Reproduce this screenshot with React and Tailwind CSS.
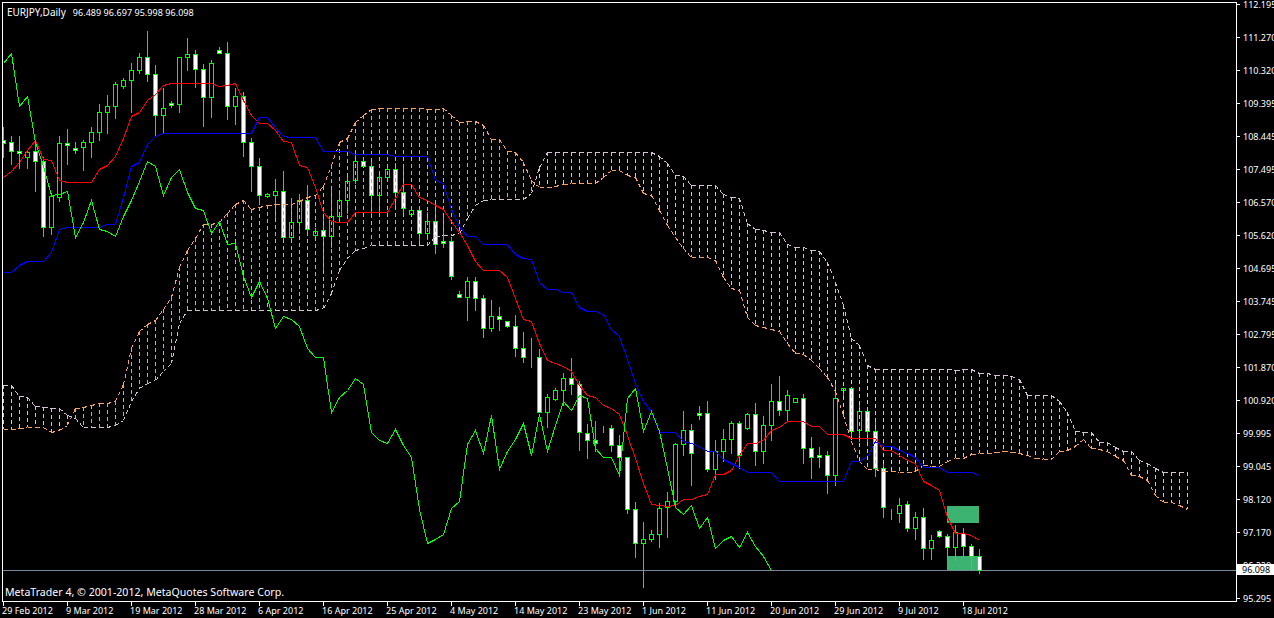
const C = [
[127,140,143,157,1],[136,142,151,164,1],[136,151,153,168,1],[150,152,157,168,0],[140,151,161,191,1],[157,161,227,236,1],[193,196,227,234,0],[136,143,197,201,0],[129,143,145,164,1],[142,148,150,153,1],
[140,142,147,170,0],[127,132,142,157,0],[104,112,132,140,0],[95,106,112,133,0],[82,84,106,118,0],[78,80,86,88,0],[63,70,80,112,0],[53,57,70,73,0],[31,57,74,81,1],[65,74,115,136,1],
[88,108,115,132,0],[101,103,105,107,1],[57,57,104,112,0],[38,54,57,70,0],[50,54,69,87,1],[64,69,97,126,1],[60,63,97,117,0],[47,50,53,53,1],[42,53,106,119,1],[88,96,106,124,0],
[92,96,142,156,1],[138,142,166,191,1],[158,166,195,204,1],[193,194,196,197,0],[179,191,195,218,0],[171,191,237,239,1],[198,222,237,240,0],[194,200,222,233,0],[185,200,229,231,1],[228,231,235,237,0],
[217,230,236,272,1],[190,216,236,247,0],[190,200,216,220,0],[173,181,200,213,0],[153,161,180,183,0],[160,161,166,167,1],[158,166,195,213,1],[173,177,195,212,0],[164,169,177,180,0],[163,169,192,207,1],
[168,192,208,215,1],[210,210,214,215,0],[207,210,233,243,1],[212,221,233,239,0],[203,221,244,253,1],[216,241,243,247,1],[237,241,276,279,1],[291,294,297,297,1],[277,281,297,320,0],[277,281,298,310,1],
[295,298,328,337,1],[300,316,328,331,0],[307,316,319,330,1],[321,321,326,327,1],[315,326,348,356,1],[332,348,357,362,1],[338,357,357,367,1],[349,357,412,412,1],[394,397,412,427,0],[388,390,399,400,0],
[373,378,390,405,0],[358,378,384,394,1],[381,384,432,450,1],[424,433,440,458,1],[421,440,443,451,1],[426,429,429,432,1],[425,428,445,451,1],[435,445,457,475,1],[457,457,509,513,1],[502,509,543,557,1],
[522,539,543,587,0],[530,534,539,541,0],[503,508,534,547,0],[492,501,507,537,0],[443,444,501,507,0],[411,430,444,455,0],[424,430,453,485,1],[406,413,415,419,1],[401,413,469,471,1],[440,451,469,479,0],
[429,439,451,461,0],[421,423,439,453,0],[421,423,455,468,1],[413,414,428,429,0],[403,414,451,465,1],[416,425,451,463,0],[384,401,425,440,0],[376,401,410,415,1],[390,395,410,421,0],[398,398,402,402,0],
[394,398,448,463,1],[437,448,457,478,1],[447,455,457,467,1],[451,455,475,493,1],[384,398,475,485,0],[388,388,390,398,0],[387,388,431,436,1],[405,411,430,441,0],[410,411,431,445,1],[421,431,468,476,1],
[464,468,507,517,1],[509,514,514,519,1],[498,505,513,522,0],[501,504,528,531,1],[512,517,528,539,0],[508,517,548,559,1],[535,540,548,559,0],[530,531,536,537,1],[534,536,547,560,1],[525,532,547,560,0],
[528,533,546,556,1],[544,546,556,570,1],[549,556,570,573,1],
];
const TENKAN = [177,171,162,150,140,159,160,180,182,182,182,182,169,165,156,138,116,112,100,94,85,83,83,83,83,83,83,86,85,83,100,115,123,123,130,141,142,165,167,187,212,221,222,222,212,212,212,212,212,198,184,184,197,200,205,209,221,232,245,261,270,270,270,277,298,319,321,343,360,363,366,371,385,395,397,405,408,414,435,458,483,504,505,506,505,499,499,496,494,474,474,470,455,443,443,440,430,427,421,421,421,426,426,434,434,434,438,438,438,438,450,450,455,460,463,481,485,490,517,533,533,535,540];
const KIJUN = [272,272,265,261,261,261,252,229,227,227,227,227,227,224,224,197,166,162,144,136,133,133,133,133,133,133,133,133,133,133,133,133,117,117,127,136,137,137,137,137,151,151,151,151,154,154,154,154,154,156,156,156,156,156,180,183,209,226,236,236,244,244,244,244,254,258,259,282,289,289,292,292,307,311,311,314,329,336,359,383,401,411,432,432,432,441,443,446,451,451,459,463,467,472,472,472,472,481,481,481,481,481,481,481,481,481,461,461,456,441,446,446,450,453,457,467,467,467,472,472,472,472,475];
const SPAN_A = [429,429,428,427,427,427,432,430,425,408,407,405,403,403,401,384,348,331,324,320,309,297,267,250,238,224,224,222,213,204,200,209,207,205,204,204,204,201,197,195,186,165,142,138,122,115,109,108,108,108,108,108,108,109,109,108,115,122,121,121,125,139,139,151,152,162,180,187,187,186,184,183,183,183,183,177,170,170,175,177,193,195,210,225,237,248,257,257,257,260,277,288,290,317,325,327,329,331,343,353,354,360,368,377,391,415,441,461,469,469,471,471,472,472,471,465,466,466,461,458,458,454,453,453,452,451,452,453,455,458,459,459,451,450,446,439,448,449,451,456,460,475,476,480,495,502,502,505,509];
const SPAN_B = [385,385,396,397,406,407,408,408,415,418,427,427,427,427,425,420,401,388,383,380,371,363,323,310,310,310,310,310,310,310,310,310,310,310,310,310,310,310,310,310,308,293,270,258,250,248,245,245,245,245,245,245,245,245,236,235,235,233,218,205,200,199,199,199,199,199,193,167,152,152,152,152,152,152,152,152,152,152,152,152,152,152,156,163,175,176,185,185,185,185,194,197,198,223,229,230,232,232,244,247,247,250,251,262,282,305,338,345,365,369,369,369,369,369,369,369,369,369,369,370,369,369,373,373,375,375,376,379,395,395,395,395,401,412,431,432,432,442,442,447,451,451,460,463,468,472,472,472,472];

const AXIS = ['112.195','111.270','110.320','109.395','108.445','107.495','106.570','105.620','104.695','103.745','102.795','101.870','100.920','99.995','99.045','98.120','97.170','96.220','95.295'];
const DATES = ['29 Feb 2012','9 Mar 2012','19 Mar 2012','28 Mar 2012','6 Apr 2012','16 Apr 2012','25 Apr 2012','4 May 2012','14 May 2012','23 May 2012','1 Jun 2012','11 Jun 2012','20 Jun 2012','29 Jun 2012','9 Jul 2012','18 Jul 2012'];

const px = (i) => 3.5 + 8 * i;
const pts = (arr) => arr.map((y, i) => `${px(i)},${y + 0.5}`).join(' ');
const CHIKOU = C.slice(26).map((c) => (c[4] ? c[2] : c[1]));
const SAND = '#f4a460';
const THISTLE = '#d8bfd8';
const DASH = '4 3';

function Chart() {
  return (
    <svg width="1233" height="598" viewBox="3 3 1233 598" shapeRendering="crispEdges" className="block">
      <rect x="947" y="506" width="32" height="17" fill="#3cb371" />
      <rect x="947" y="556" width="32" height="15" fill="#3cb371" />
      <line x1="3" x2="1236" y1="570.5" y2="570.5" stroke="#778899" />
      {C.map(([hi, top, bot, lo, white], i) => (
        <g key={i}>
          <line x1={px(i)} x2={px(i)} y1={hi} y2={lo + 1} stroke="#00ff00" />
          <rect x={px(i) - 2} y={top + 0.5} width="4" height={Math.max(bot - top, 0)} fill={white ? '#ffffff' : '#000000'} stroke="#00ff00" />
        </g>
      ))}
      {SPAN_A.map((a, i) => (
        <line key={i} x1={px(i)} x2={px(i)} y1={Math.min(a, SPAN_B[i])} y2={Math.max(a, SPAN_B[i])} stroke={a < SPAN_B[i] ? SAND : THISTLE} strokeDasharray={DASH} />
      ))}
      {SPAN_A.slice(0, -1).map((a, i) => (
        <line key={i} x1={px(i)} x2={px(i + 1)} y1={a + 0.5} y2={SPAN_A[i + 1] + 0.5} stroke={SAND} strokeDasharray={DASH} />
      ))}
      {SPAN_B.slice(0, -1).map((b, i) => (
        <line key={i} x1={px(i)} x2={px(i + 1)} y1={b + 0.5} y2={SPAN_B[i + 1] + 0.5} stroke={THISTLE} strokeDasharray={DASH} />
      ))}
      <polyline points={pts(TENKAN)} fill="none" stroke="#ff0000" />
      <polyline points={pts(KIJUN)} fill="none" stroke="#0000ff" />
      <polyline points={pts(CHIKOU)} fill="none" stroke="#00ff00" />
    </svg>
  );
}

export default function App() {
  return (
    <div className="w-[1274px] h-[618px] overflow-hidden bg-black text-white pl-[2px] pt-[2px] font-['Noto_Sans',sans-serif] text-[9px] leading-none">
      <div className="relative flex h-[600px]">
        <div className="relative w-[1235px] h-[600px] border border-white">
          <Chart />
          <div className="absolute left-[4px] top-[3px] flex items-baseline whitespace-pre leading-[12px] text-[10px]">
            <span>EURJPY,Daily</span>
            <span className="ml-[7px] text-[9px] tracking-[0.05px]">96.489 96.697 95.998 96.098</span>
          </div>
          <div className="absolute left-[2px] top-[583px] whitespace-pre leading-[13px] text-[10.6px]">MetaTrader 4, © 2001-2012, MetaQuotes Software Corp.</div>
        </div>
        <div className="flex flex-col -mt-[14px] w-[37px] shrink-0">
          {AXIS.map((v) => (
            <div key={v} className="flex items-center h-[33px] shrink-0 whitespace-nowrap">
              <span className="w-[3px] h-px bg-white mr-[3px] shrink-0" />
              <span>{v}</span>
            </div>
          ))}
        </div>
        <div className="absolute left-[1235px] top-[562px] w-[37px] h-[11px] bg-white text-black pl-[5px] leading-[11px]">96.098</div>
      </div>
      <div className="flex pl-px">
        {DATES.map((d) => (
          <div key={d} className="w-[64px] shrink-0">
            <div className="w-px h-[4px] bg-white" />
            <div className="-ml-px whitespace-nowrap leading-[10px]">{d}</div>
          </div>
        ))}
      </div>
    </div>
  );
}
